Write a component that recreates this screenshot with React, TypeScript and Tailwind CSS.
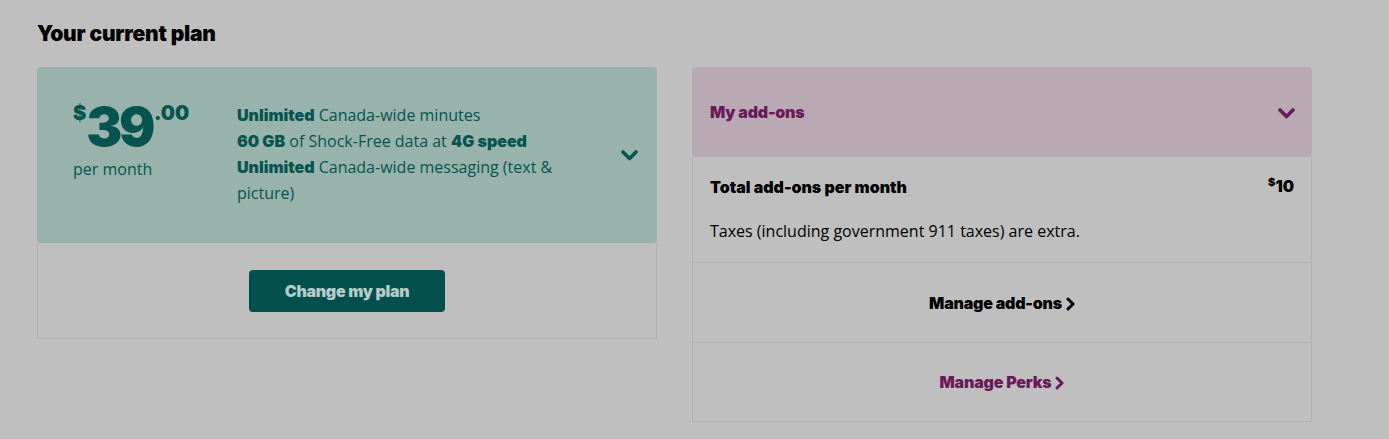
const Down = ({ className }: { className?: string }) => (
  <svg width="17" height="11" viewBox="0 0 17 11" className={className} fill="none">
    <polyline points="2,2 8.5,8.5 15,2" stroke="currentColor" strokeWidth="3.6" strokeLinecap="round" strokeLinejoin="round" />
  </svg>
);

const Right = () => (
  <svg width="9" height="14" viewBox="0 0 9 14" fill="none" className="mt-[2px]">
    <polyline points="2,2 7,7 2,12" stroke="currentColor" strokeWidth="3" strokeLinecap="round" strokeLinejoin="round" />
  </svg>
);

const App = () => {
  return (
    <div
      className="min-h-[439px] w-full bg-[#bfbfbf] px-[37px] pt-[20px] text-black"
      style={{ fontFamily: '"Open Sans", "Noto Sans", sans-serif' }}
    >
      <h2 className="font-['Inter',sans-serif] text-[21px] font-black leading-[28px] tracking-[-0.2px]">
        Your current plan
      </h2>
      <div className="mt-[19px] flex items-start gap-[35px]">
        {/* plan card */}
        <div className="w-[620px]">
          <div className="flex h-[176px] items-start rounded-[4px] bg-[#97b3ab] text-[#07544f]">
            <div className="w-[200px] pl-[36px] pt-[37px]">
              <div className="flex h-[48px] items-start font-['Inter',sans-serif] font-black">
                <span className="-mt-[1px] text-[20px] leading-none">$</span>
                <span className="text-[54px] leading-[46px] tracking-[-3.5px]">39</span>
                <span className="ml-[2px] -mt-[1px] text-[20px] leading-none">.00</span>
              </div>
              <div className="mt-[6px] text-[16px] leading-[22px]">per month</div>
            </div>
            <div className="w-[350px] pt-[35px] text-[16px] leading-[26px]">
              <p>
                <b className="font-['Inter',sans-serif] font-black">Unlimited</b> Canada-wide minutes
              </p>
              <p>
                <b className="font-['Inter',sans-serif] font-black">60 GB</b> of Shock-Free data at{" "}
                <b className="font-['Inter',sans-serif] font-black">4G speed</b>
              </p>
              <p>
                <b className="font-['Inter',sans-serif] font-black">Unlimited</b> Canada-wide messaging (text &amp; picture)
              </p>
            </div>
            <div className="ml-auto pr-[19px] pt-[83px]">
              <Down />
            </div>
          </div>
          <div className="flex h-[96px] items-center justify-center border border-t-0 border-[#b0b0b0]">
            <button className="h-[42px] w-[196px] rounded-[4px] bg-[#02504e] font-['Inter',sans-serif] text-[16px] font-black tracking-[-0.3px] text-[#b7cbc8]">
              Change my plan
            </button>
          </div>
        </div>

        {/* add-ons card */}
        <div className="w-[620px]">
          <div className="flex h-[90px] items-center justify-between rounded-[4px] bg-[#b9a9b2] pl-[18px] pr-[17px] text-[#6a1a5a]">
            <span className="font-['Inter',sans-serif] text-[16px] font-black tracking-[-0.2px]">My add-ons</span>
            <Down className="mt-[3px]" />
          </div>
          <div className="border border-t-0 border-[#b0b0b0]">
            <div className="px-[17px] pb-[20px] pt-[18px]">
              <div className="flex items-start justify-between">
                <span className="font-['Inter',sans-serif] text-[16px] font-black leading-[24px]">
                  Total add-ons per month
                </span>
                <span className="flex items-start font-['Inter',sans-serif] font-black">
                  <span className="mt-[2px] text-[11px] leading-none">$</span>
                  <span className="text-[16px] leading-[22px]">10</span>
                </span>
              </div>
              <p className="mt-[21px] text-[16px] leading-[22px]">Taxes (including government 911 taxes) are extra.</p>
            </div>
            <div className="flex h-[80px] items-center justify-center border-t border-[#b0b0b0]">
              <span className="flex items-center gap-[4px] font-['Inter',sans-serif] text-[16px] font-black tracking-[-0.2px]">
                Manage add-ons <Right />
              </span>
            </div>
            <div className="flex h-[79px] items-center justify-center border-t border-[#b0b0b0] text-[#6a1a5a]">
              <span className="flex items-center gap-[4px] font-['Inter',sans-serif] text-[16px] font-black tracking-[-0.2px]">
                Manage Perks <Right />
              </span>
            </div>
          </div>
        </div>
      </div>
    </div>
  );
};

export default App;
